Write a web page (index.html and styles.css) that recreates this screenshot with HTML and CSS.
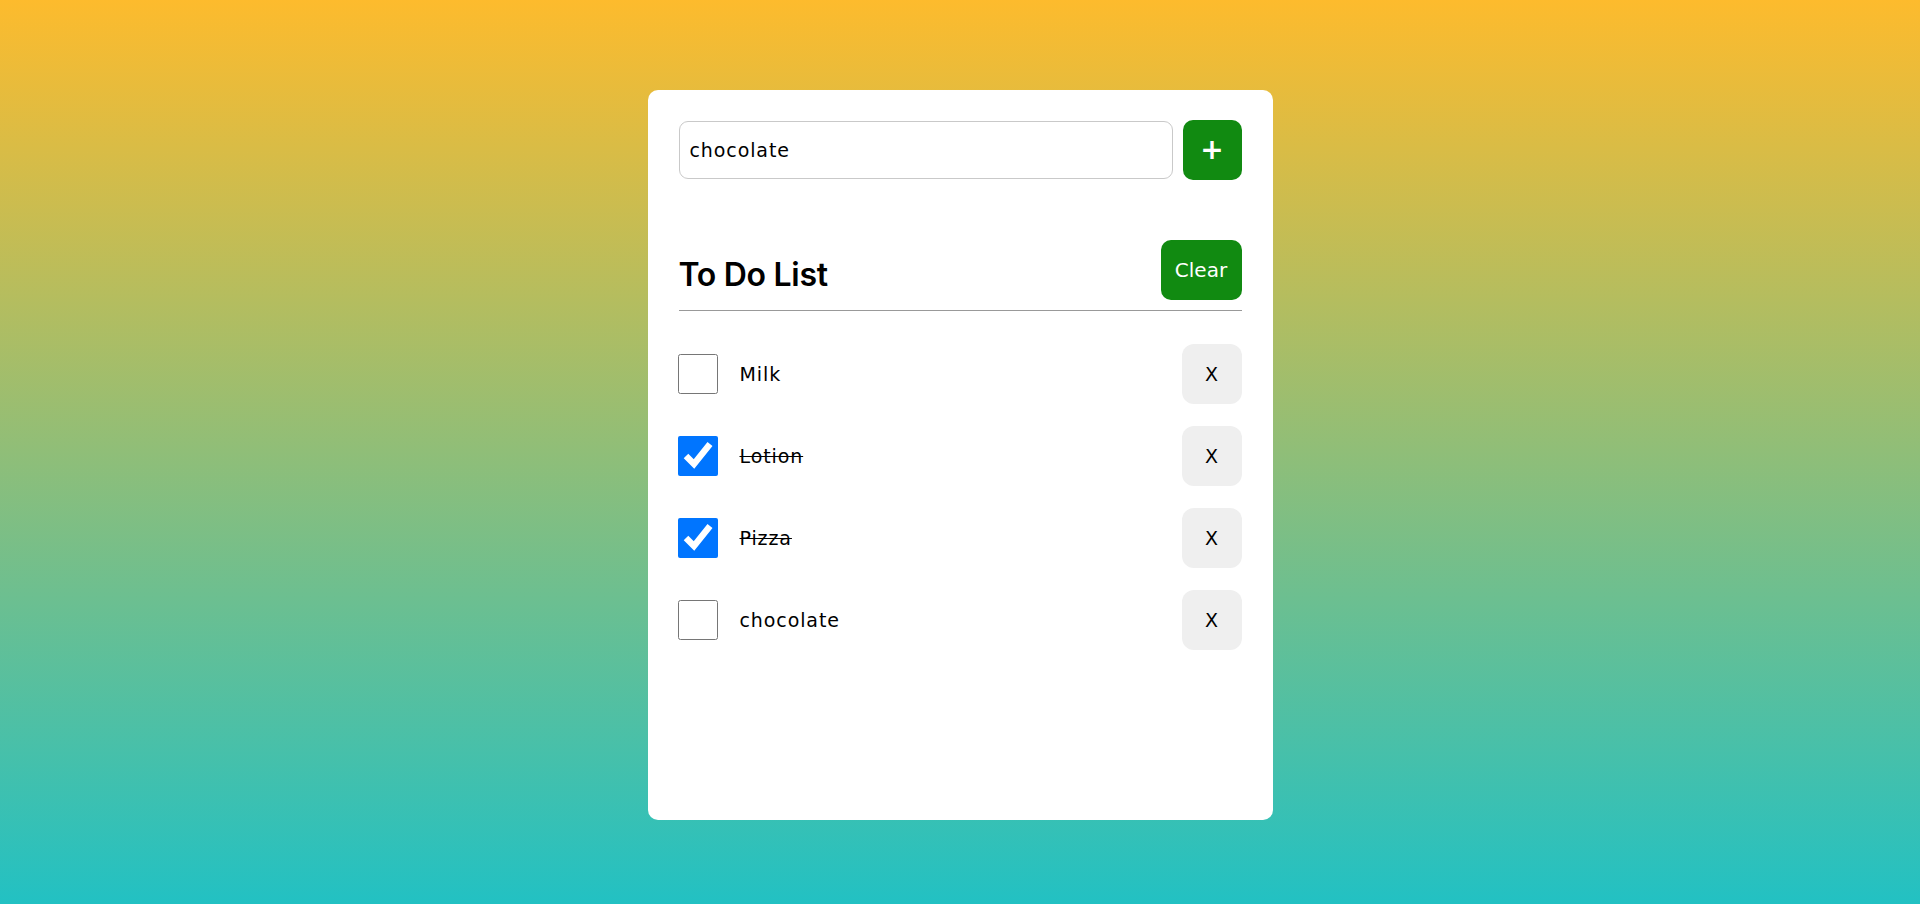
FILE: index.html
```html
<!DOCTYPE html>
<html lang="en">
<head>
<meta charset="utf-8">
<title>To Do List</title>
<link rel="stylesheet" href="styles.css">
</head>
<body>
<div class="card">
  <div class="add-row">
    <input class="text-input" type="text" value="chocolate">
    <button class="btn btn-green btn-add">+</button>
  </div>
  <div class="header">
    <h1 class="title">To Do List</h1>
    <button class="btn btn-green btn-clear">Clear</button>
  </div>
  <ul class="list">
    <li class="item">
      <input class="check" type="checkbox">
      <span class="label">Milk</span>
      <button class="btn btn-remove">X</button>
    </li>
    <li class="item done">
      <input class="check" type="checkbox" checked>
      <span class="label">Lotion</span>
      <button class="btn btn-remove">X</button>
    </li>
    <li class="item done">
      <input class="check" type="checkbox" checked>
      <span class="label">Pizza</span>
      <button class="btn btn-remove">X</button>
    </li>
    <li class="item">
      <input class="check" type="checkbox">
      <span class="label">chocolate</span>
      <button class="btn btn-remove">X</button>
    </li>
  </ul>
</div>
</body>
</html>
```
FILE: styles.css
```css
* { box-sizing: border-box; }
html, body { margin: 0; padding: 0; }
body {
  min-height: 904px;
  background: linear-gradient(0deg, #22c1c3 0%, #fdbb2d 100%);
  font-family: "DejaVu Sans", "Noto Sans", sans-serif;
  color: #000;
  overflow: hidden;
}
.card {
  width: 625px;
  height: 730px;
  margin: 90px auto 0;
  background: #fff;
  border-radius: 10px;
  padding: 30px 31px 30px 31px;
}
.add-row {
  display: flex;
  align-items: center;
  gap: 10px;
  height: 60px;
}
.text-input {
  flex: 1;
  height: 58px;
  border: 1px solid #c9c9c9;
  border-radius: 9px;
  padding: 0 10px;
  font-family: inherit;
  font-size: 19px;
  letter-spacing: 0.9px;
  color: #000;
  outline: none;
}
.btn {
  border: none;
  font-family: inherit;
  cursor: pointer;
  display: flex;
  align-items: center;
  justify-content: center;
  padding: 0;
}
.btn-green {
  background: #118a11;
  color: #fff;
  border-radius: 10px;
}
.btn-add {
  width: 59px;
  height: 60px;
  font-size: 28px;
  font-weight: 700;
  line-height: 1;
}
.header {
  margin-top: 60px;
  display: flex;
  justify-content: space-between;
  align-items: flex-end;
  padding-bottom: 10px;
  border-bottom: 1px solid #999;
}
.title {
  margin: 0 0 9px 0;
  font-family: Inter, "DejaVu Sans", sans-serif;
  font-size: 32px;
  font-weight: 600;
  letter-spacing: -0.3px;
  line-height: 1;
}
.btn-clear {
  width: 81px;
  height: 60px;
  font-size: 20px;
}
.list {
  list-style: none;
  margin: 33px 0 0 0;
  padding: 0;
  display: flex;
  flex-direction: column;
  gap: 22px;
}
.item {
  display: flex;
  align-items: center;
  height: 60px;
}
.check {
  width: 40px;
  height: 40px;
  margin: 0 0 0 -1px;
}
.label {
  margin-left: 22px;
  font-size: 19px;
  letter-spacing: 0.9px;
  flex: 1;
}
.done .label { text-decoration: line-through; }
.btn-remove {
  width: 60px;
  height: 60px;
  background: #efefef;
  border-radius: 12px;
  font-size: 19px;
  color: #000;
}
```
